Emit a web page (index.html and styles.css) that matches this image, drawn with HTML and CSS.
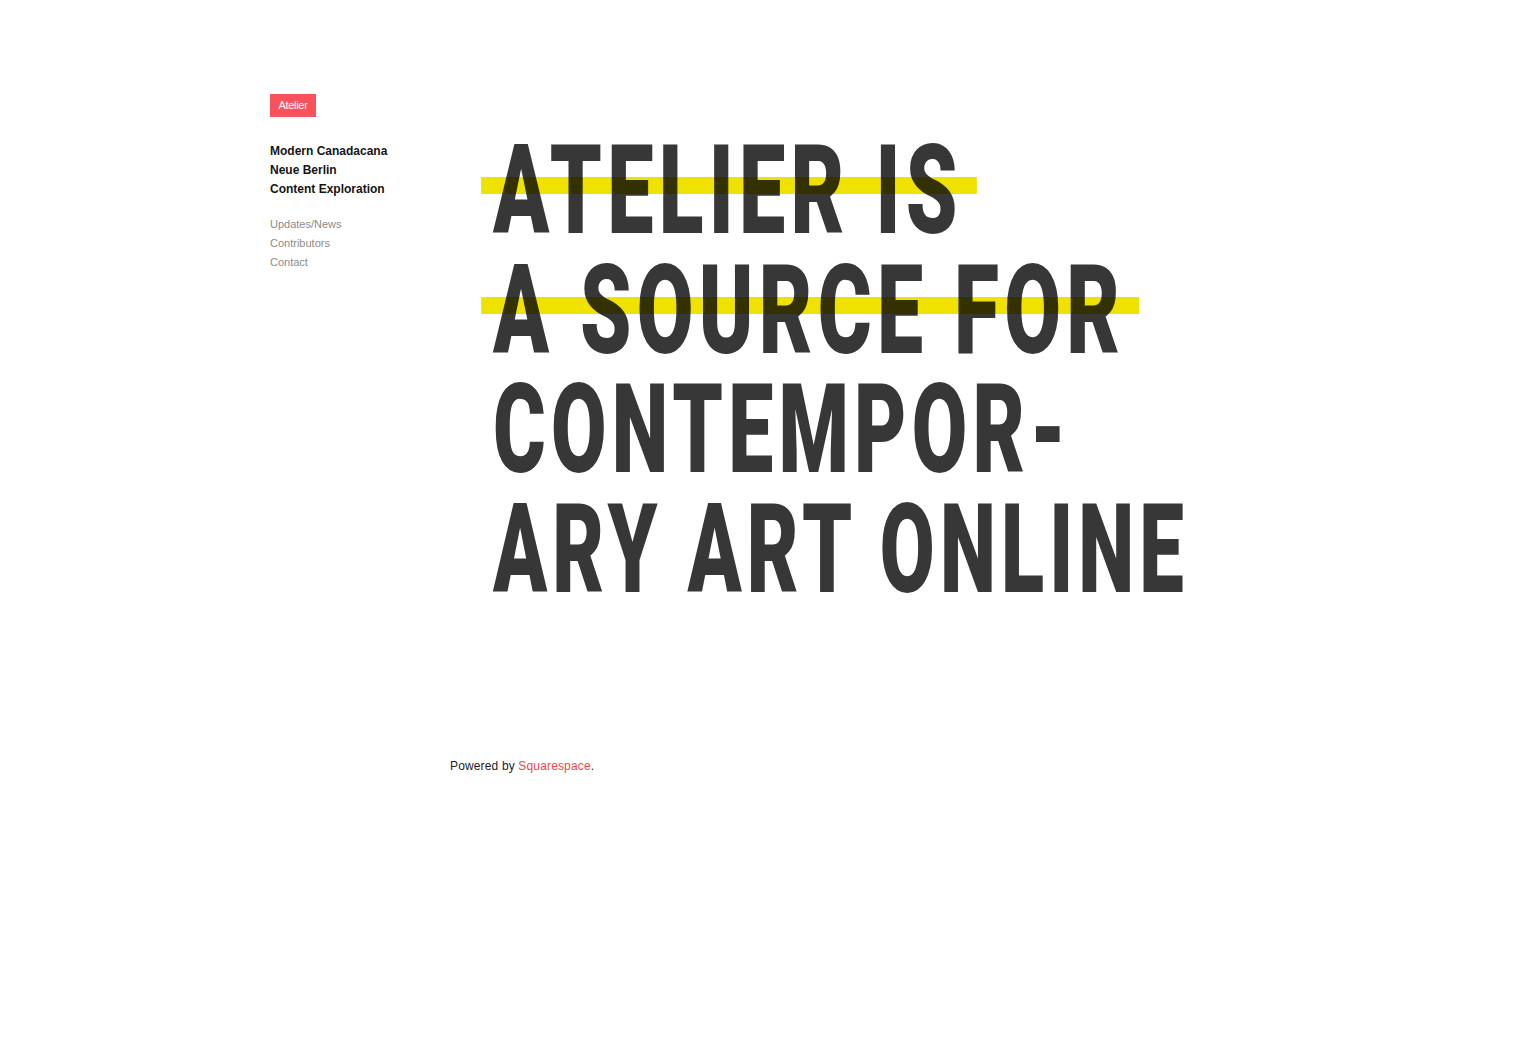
FILE: index.html
```html
<!DOCTYPE html>
<html>
<head>
<meta charset="utf-8">
<title>Atelier</title>
<link rel="stylesheet" href="styles.css">
</head>
<body>
<div class="page">
  <div class="layout">
    <aside class="sidebar">
      <a class="badge" href="#">Atelier</a>
      <ul class="nav-main">
        <li><a href="#">Modern Canadacana</a></li>
        <li><a href="#">Neue Berlin</a></li>
        <li><a href="#">Content Exploration</a></li>
      </ul>
      <ul class="nav-sub">
        <li><a href="#">Updates/News</a></li>
        <li><a href="#">Contributors</a></li>
        <li><a href="#">Contact</a></li>
      </ul>
    </aside>
    <main class="content">
      <h1 class="headline">
        <span class="line"><span class="txt hl l1">ATELIER IS</span></span>
        <span class="line"><span class="txt hl l2">A SOURCE FOR</span></span>
        <span class="line"><span class="txt l3">CONTEMPOR-</span></span>
        <span class="line"><span class="txt l4">ARY ART ONLINE</span></span>
      </h1>
    </main>
  </div>
  <footer class="footer">Powered by <a href="#">Squarespace</a>.</footer>
</div>
</body>
</html>
```

FILE: styles.css
```css
html, body {
  margin: 0;
  padding: 0;
  background: #ffffff;
}

body {
  font-family: "Liberation Sans", Arial, sans-serif;
  color: #1a1a1a;
}

a {
  text-decoration: none;
  color: inherit;
}

.page {
  padding: 94px 0 0 270px;
}

.layout {
  display: flex;
}

.sidebar {
  width: 220px;
  flex: none;
}

.badge {
  display: inline-block;
  width: 46px;
  text-align: center;
  background: #f9525a;
  color: #ffffff;
  font-size: 11px;
  line-height: 23px;
  height: 23px;
  letter-spacing: -0.3px;
}

.nav-main,
.nav-sub {
  list-style: none;
  margin: 0;
  padding: 0;
}

.nav-main {
  margin-top: 25px;
  font-size: 12px;
  font-weight: bold;
  line-height: 19px;
  color: #151515;
}

.nav-sub {
  margin-top: 16px;
  font-size: 11px;
  line-height: 19px;
  color: #8c8c8c;
}

.content {
  flex: 1;
}

.headline {
  margin: 37px 0 0 3px;
  font-family: Roboto, "Liberation Sans", sans-serif;
  font-weight: 900;
  font-size: 125px;
  line-height: 119.7px;
  letter-spacing: 8px;
  color: #373737;
}

.line {
  display: block;
  height: 119.7px;
  white-space: nowrap;
}

.txt {
  display: inline-block;
  position: relative;
  transform-origin: 0 0;
}

.l1 { transform: scaleX(0.661); }
.l2 { transform: scaleX(0.658); }
.l3 { transform: scaleX(0.644); }
.l4 { transform: scaleX(0.637); }

.hl::after {
  content: "";
  position: absolute;
  left: -18px;
  right: -21px;
  top: 46px;
  height: 17px;
  background: #f0e200;
  mix-blend-mode: multiply;
}

.footer {
  margin: 148px 0 0 180px;
  font-size: 12px;
  line-height: 16px;
  letter-spacing: 0.15px;
  color: #222222;
}

.footer a {
  color: #f2454d;
}
```
